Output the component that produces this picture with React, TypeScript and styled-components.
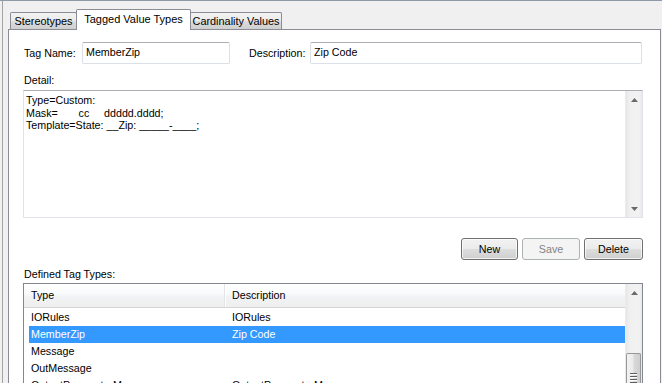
import React from "react";
import styled, { createGlobalStyle } from "styled-components";

const Global = createGlobalStyle`
  html, body { margin: 0; padding: 0; background: #f0f0f0; overflow: hidden; }
  body { font-family: "Liberation Sans", Arial, sans-serif; font-size: 10.7px; color: #000; }
  * { box-sizing: border-box; }
`;

const Window = styled.div`
  width: 662px;
  height: 383px;
  border-top: 1px solid #8e9aa8;
  padding-left: 2px;
  display: flex;
`;

const Frame = styled.div`
  flex: 1;
  border-left: 1px solid #a3a3a3;
  padding: 8px 1px 0 5px;
  display: flex;
  flex-direction: column;
  min-width: 0;
`;

const TabStrip = styled.div`
  height: 20px;
  display: flex;
  align-items: flex-end;
  padding-left: 2px;
  position: relative;
  z-index: 1;
`;

const Tab = styled.div<{ $active?: boolean; $w: number }>`
  width: ${(p) => p.$w}px;
  height: ${(p) => (p.$active ? 21 : 17)}px;
  margin-right: -1px;
  margin-bottom: ${(p) => (p.$active ? -1 : 0)}px;
  border: 1px solid #898c95;
  border-bottom: none;
  border-radius: 2px 2px 0 0;
  background: ${(p) =>
    p.$active ? "#fff" : "linear-gradient(#f2f2f2 0%, #ebebeb 50%, #dddddd 51%, #cfcfcf 100%)"};
  text-align: center;
  font-size: ${(p) => (p.$active ? 11 : 10.9)}px;
  line-height: ${(p) => (p.$active ? 18 : 16)}px;
  white-space: nowrap;
  position: relative;
  z-index: ${(p) => (p.$active ? 2 : 1)};
`;

const Panel = styled.div`
  flex: 1;
  background: #fff;
  border: 1px solid #898c95;
  border-bottom: none;
  padding: 12px 17px 0 14px;
  display: flex;
  flex-direction: column;
  min-height: 0;
`;

const FieldRow = styled.div`
  display: flex;
  align-items: center;
  height: 22px;
`;

const Label = styled.label<{ $w?: number; $ml?: number }>`
  width: ${(p) => (p.$w ? `${p.$w}px` : "auto")};
  margin-left: ${(p) => p.$ml ?? 0}px;
  flex: none;
  white-space: nowrap;
`;

const TextBox = styled.div<{ $w?: number }>`
  height: 22px;
  ${(p) => (p.$w ? `width: ${p.$w}px; flex: none;` : "flex: 1; margin-right: 1px;")}
  border: 1px solid #dbdfe6;
  border-top-color: #abadb3;
  border-radius: 2px;
  padding: 0 3px;
  line-height: 18px;
  white-space: nowrap;
`;

const BlockLabel = styled.div`
  margin: 8px 0 2px 1px;
  height: 16px;
  line-height: 16px;
`;

const Memo = styled.div`
  height: 128px;
  display: flex;
  border: 1px solid #e2e3ea;
  border-top-color: #abadb3;
`;

const MemoText = styled.div`
  flex: 1;
  padding: 3px 2px;
  white-space: pre;
  line-height: 12.5px;
`;

const VScroll = styled.div`
  width: 17px;
  flex: none;
  display: flex;
  flex-direction: column;
  background: linear-gradient(to right, #e6e6e6 0%, #f0f0f0 20%, #f2f2f2 80%, #e9e9e9 100%);
  border-left: 1px solid #ececec;
`;

const Arrow = styled.div`
  height: 17px;
  flex: none;
  display: flex;
  align-items: center;
  justify-content: center;
`;

const Spacer = styled.div`
  flex: 1;
`;

const Thumb = styled.div<{ $top: number }>`
  margin: ${(p) => p.$top}px 1px 0 0;
  flex: 1;
  border: 1px solid #979797;
  border-bottom: none;
  border-radius: 2px 2px 0 0;
  background: linear-gradient(to right, #f2f2f2 0%, #ebebeb 45%, #d9d9d9 55%, #cecece 100%);
  display: flex;
  flex-direction: column;
  align-items: center;
  padding-top: 19px;
  gap: 2px;
`;

const Grip = styled.div`
  width: 7px;
  height: 1px;
  background: #5f5f5f;
  box-shadow: 0 1px 0 #fff;
`;

const ButtonRow = styled.div`
  margin-top: 20px;
  display: flex;
  justify-content: flex-end;
  gap: 4px;
`;

const Button = styled.button<{ $w: number }>`
  width: ${(p) => p.$w}px;
  height: 22px;
  font-family: "Liberation Sans", Arial, sans-serif;
  font-size: 10.7px;
  font-weight: 400;
  color: #000;
  border: 1px solid #707070;
  border-radius: 3px;
  background: linear-gradient(#f2f2f2 0%, #ebebeb 48%, #dddddd 52%, #cfcfcf 100%);
  box-shadow: inset 0 0 0 1px rgba(255, 255, 255, 0.7);
  padding: 0;
  &:disabled {
    color: #838383;
    border-color: #adb2b5;
    background: #f4f4f4;
    box-shadow: none;
  }
`;

const ListLabel = styled.div`
  margin: 6px 0 1px 1px;
  height: 16px;
  line-height: 16px;
`;

const ListBox = styled.div`
  flex: 1;
  display: flex;
  border: 1px solid #828790;
  border-bottom: none;
  min-height: 0;
  overflow: hidden;
`;

const ListMain = styled.div`
  flex: 1;
  display: flex;
  flex-direction: column;
`;

const Header = styled.div`
  height: 24px;
  display: grid;
  grid-template-columns: 201px 1fr;
  background: linear-gradient(#ffffff 0%, #f8f9fa 45%, #f1f2f3 55%, #efefef 100%);
  border-bottom: 1px solid #d5d5d5;
`;

const HeadCell = styled.div<{ $divider?: boolean }>`
  padding-left: 7px;
  line-height: 23px;
  ${(p) => (p.$divider ? "border-right: 1px solid #e3e4e6; box-shadow: 1px 0 0 #fff;" : "")}
`;

const Rows = styled.div`
  padding: 1px 0 0 5px;
`;

const Row = styled.div<{ $sel?: boolean }>`
  height: 17px;
  line-height: 17px;
  display: grid;
  grid-template-columns: 201px 1fr;
  padding-left: 2px;
  background: ${(p) => (p.$sel ? "#3399ff" : "transparent")};
  color: ${(p) => (p.$sel ? "#fff" : "#000")};
  white-space: nowrap;
`;

const UpArrow = () => (
  <svg width="7" height="4" viewBox="0 0 7 4">
    <path d="M0 4 L3.5 0 L7 4 Z" fill="#6a6a6a" />
  </svg>
);
const DownArrow = () => (
  <svg width="7" height="4" viewBox="0 0 7 4">
    <path d="M0 0 L3.5 4 L7 0 Z" fill="#6a6a6a" />
  </svg>
);

const rows = [
  { type: "IORules", desc: "IORules" },
  { type: "MemberZip", desc: "Zip Code", sel: true },
  { type: "Message", desc: "" },
  { type: "OutMessage", desc: "" },
  { type: "OutputParameterMessage", desc: "OutputParameterMessage" },
];

export default function App() {
  return (
    <>
      <Global />
      <Window>
        <Frame>
          <TabStrip>
            <Tab $w={67}>Stereotypes</Tab>
            <Tab $w={115} $active>
              Tagged Value Types
            </Tab>
            <Tab $w={92}>Cardinality Values</Tab>
          </TabStrip>
          <Panel>
            <FieldRow>
              <Label $w={58} $ml={1}>Tag Name:</Label>
              <TextBox $w={148}>MemberZip</TextBox>
              <Label $w={61} $ml={19}>Description:</Label>
              <TextBox>Zip Code</TextBox>
            </FieldRow>
            <BlockLabel>Detail:</BlockLabel>
            <Memo>
              <MemoText>
                {"Type=Custom:\nMask=       cc     ddddd.dddd;\nTemplate=State: __Zip: _____-____;"}
              </MemoText>
              <VScroll>
                <Arrow>
                  <UpArrow />
                </Arrow>
                <Spacer />
                <Arrow>
                  <DownArrow />
                </Arrow>
              </VScroll>
            </Memo>
            <ButtonRow>
              <Button $w={57}>New</Button>
              <Button $w={58} disabled>
                Save
              </Button>
              <Button $w={59}>Delete</Button>
            </ButtonRow>
            <ListLabel>Defined Tag Types:</ListLabel>
            <ListBox>
              <ListMain>
                <Header>
                  <HeadCell $divider>Type</HeadCell>
                  <HeadCell>Description</HeadCell>
                </Header>
                <Rows>
                  {rows.map((r) => (
                    <Row key={r.type} $sel={r.sel}>
                      <span>{r.type}</span>
                      <span>{r.desc}</span>
                    </Row>
                  ))}
                </Rows>
              </ListMain>
              <VScroll>
                <Arrow>
                  <UpArrow />
                </Arrow>
                <Thumb $top={52}>
                  <Grip />
                  <Grip />
                  <Grip />
                  <Grip />
                </Thumb>
              </VScroll>
            </ListBox>
          </Panel>
        </Frame>
      </Window>
    </>
  );
}
